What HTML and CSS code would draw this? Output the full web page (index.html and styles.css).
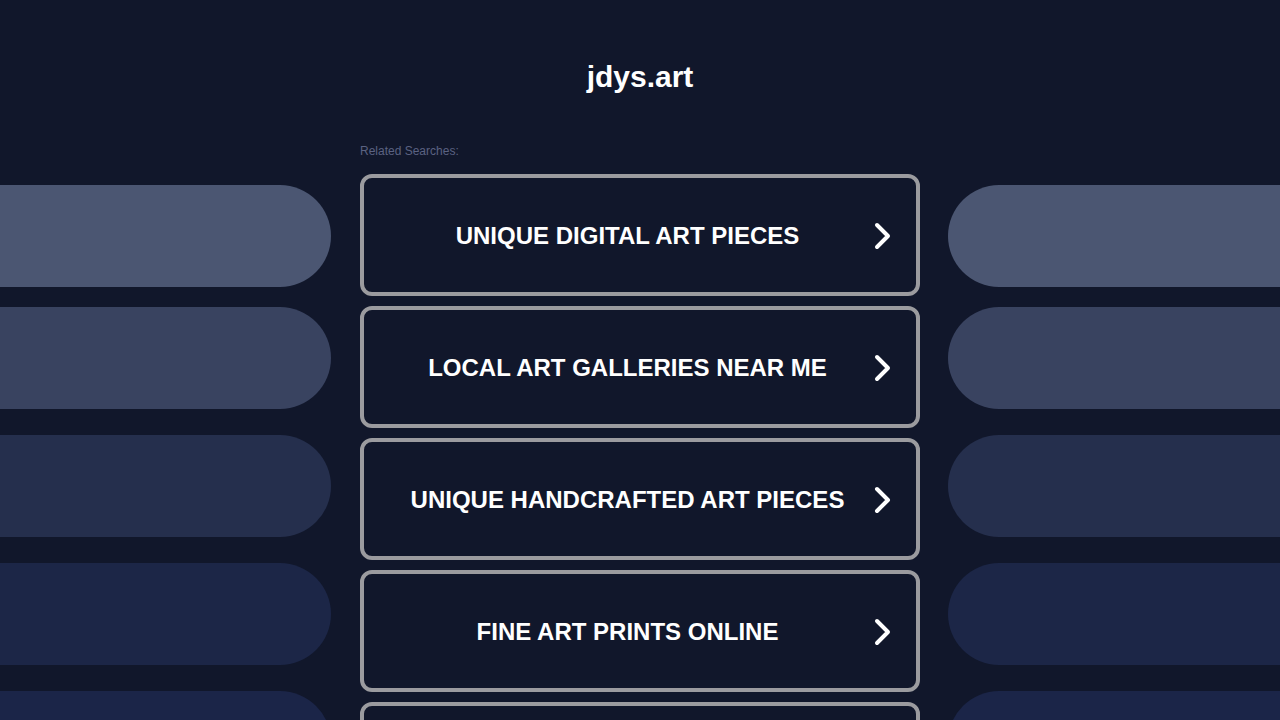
FILE: index.html
```html
<!DOCTYPE html>
<html lang="en">
<head>
    <meta charset="UTF-8">
    <meta name="viewport" content="width=device-width, initial-scale=1.0">
    <title>jdys.art</title>
    <link rel="stylesheet" href="styles.css">
</head>
<body>
    <header>
        <h1>jdys.art</h1>
    </header>
    <div class="layout">
        <div class="side side-left">
            <div class="pill pill-1"></div>
            <div class="pill pill-2"></div>
            <div class="pill pill-3"></div>
            <div class="pill pill-4"></div>
            <div class="pill pill-5"></div>
        </div>
        <div class="searches">
            <p class="label">Related Searches:</p>
            <a class="search-card" href="#">
                <span class="search-text">UNIQUE DIGITAL ART PIECES</span>
                <svg class="chevron" viewBox="0 0 18 28" width="18" height="28"><polyline points="4,3 15,14 4,25"/></svg>
            </a>
            <a class="search-card" href="#">
                <span class="search-text">LOCAL ART GALLERIES NEAR ME</span>
                <svg class="chevron" viewBox="0 0 18 28" width="18" height="28"><polyline points="4,3 15,14 4,25"/></svg>
            </a>
            <a class="search-card" href="#">
                <span class="search-text">UNIQUE HANDCRAFTED ART PIECES</span>
                <svg class="chevron" viewBox="0 0 18 28" width="18" height="28"><polyline points="4,3 15,14 4,25"/></svg>
            </a>
            <a class="search-card" href="#">
                <span class="search-text">FINE ART PRINTS ONLINE</span>
                <svg class="chevron" viewBox="0 0 18 28" width="18" height="28"><polyline points="4,3 15,14 4,25"/></svg>
            </a>
            <!-- last card only peeks in at the bottom -->
            <a class="search-card" href="#"></a>
        </div>
        <div class="side side-right">
            <div class="pill pill-1"></div>
            <div class="pill pill-2"></div>
            <div class="pill pill-3"></div>
            <div class="pill pill-4"></div>
            <div class="pill pill-5"></div>
        </div>
    </div>
</body>
</html>
```

FILE: styles.css
```css
html, body {
    height: 100%;
}
body {
    font-family: Arial, 'Liberation Sans', 'Helvetica Neue', sans-serif;
    margin: 0;
    padding: 0;
    background-color: #11172b;
    color: #fff;
    overflow: hidden;
}
header {
    padding-top: 60px;
    text-align: center;
}
header h1 {
    margin: 0;
    font-size: 30px;
    line-height: 34px;
    font-weight: bold;
    color: #fff;
}
.layout {
    display: grid;
    grid-template-columns: 1fr 560px 1fr;
    column-gap: 28px;
    margin-top: 50px;
}
.side {
    display: flex;
    flex-direction: column;
    padding-top: 41px;
}
.pill {
    height: 102px;
    flex-shrink: 0;
}
.pill + .pill {
    margin-top: 26px;
}
.side .pill:nth-child(2) {
    margin-top: 20px;
}
.side-left .pill {
    border-radius: 0 51px 51px 0;
    margin-right: 1px;
}
.side-right .pill {
    border-radius: 51px 0 0 51px;
}
.pill-1 { background-color: #4b5672; }
.pill-2 { background-color: #394360; }
.pill-3 { background-color: #252f4d; }
.pill-4 { background-color: #1c2647; }
.pill-5 { background-color: #1b2548; }
.searches {
    display: flex;
    flex-direction: column;
    gap: 10px;
}
.label {
    margin: 0 0 6px;
    font-size: 12px;
    line-height: 14px;
    color: #5b6282;
}
.search-card {
    display: flex;
    align-items: center;
    height: 122px;
    box-sizing: border-box;
    padding: 2px 25px 0 0;
    border: 4px solid #9b9b9f;
    border-radius: 12px;
    background-color: #11172b;
    text-decoration: none;
    flex-shrink: 0;
}
.search-text {
    flex: 1;
    text-align: center;
    font-size: 24px;
    font-weight: bold;
    color: #fff;
}
.chevron {
    margin-left: -18px;
    flex-shrink: 0;
}
.chevron polyline {
    fill: none;
    stroke: #fff;
    stroke-width: 4;
    stroke-linecap: round;
    stroke-linejoin: round;
}
```
